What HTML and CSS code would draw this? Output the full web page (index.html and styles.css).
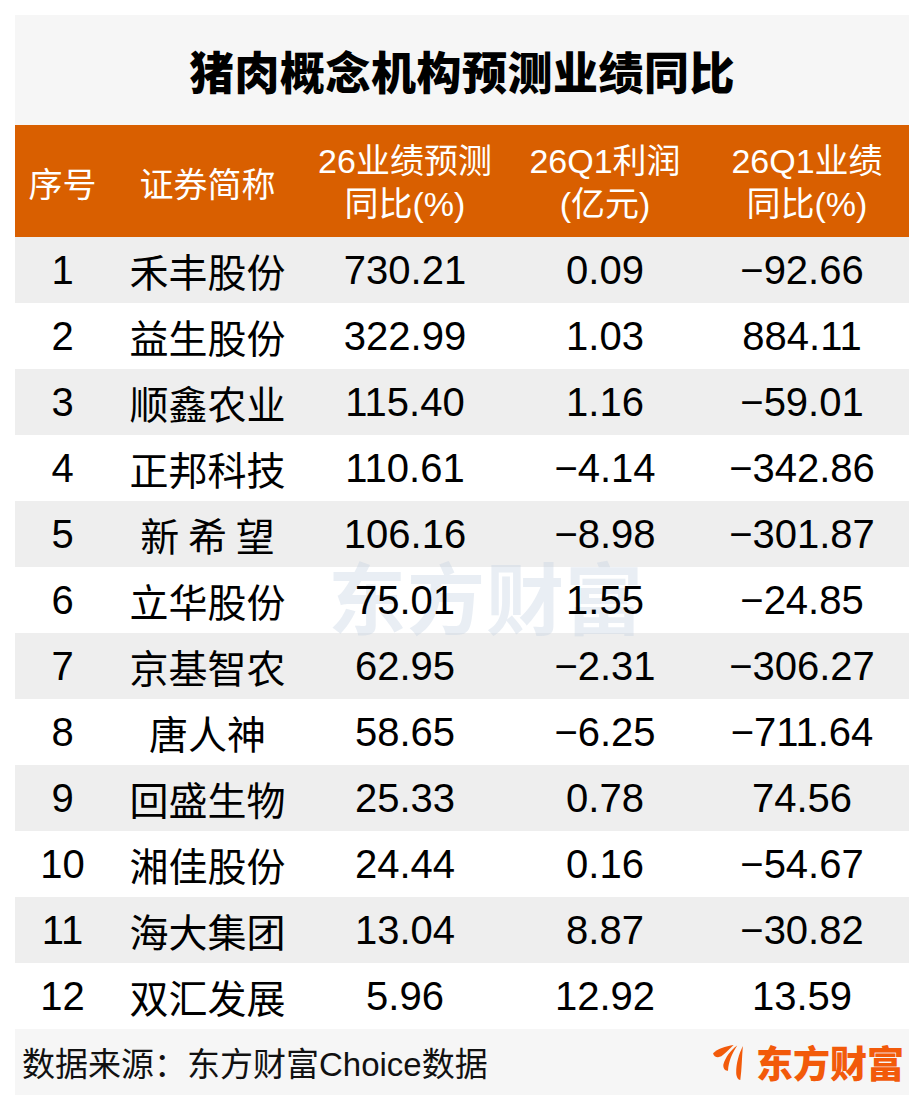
FILE: index.html
```html
<!DOCTYPE html>
<html lang="zh-CN">
<head>
<meta charset="utf-8">
<title>猪肉概念机构预测业绩同比</title>
<link rel="stylesheet" href="styles.css">
</head>
<body>
<div class="panel">
  <div class="title">猪肉概念机构预测业绩同比</div>
  <div class="table">
    <div class="watermark">东方财富</div>
    <div class="row head">
      <div class="c">序号</div>
      <div class="c">证券简称</div>
      <div class="c two"><span>26业绩预测</span><span>同比(%)</span></div>
      <div class="c two"><span>26Q1利润</span><span>(亿元)</span></div>
      <div class="c two"><span>26Q1业绩</span><span>同比(%)</span></div>
    </div>
    <div class="row odd"><div class="c">1</div><div class="c name">禾丰股份</div><div class="c">730.21</div><div class="c">0.09</div><div class="c">−92.66</div></div>
    <div class="row"><div class="c">2</div><div class="c name">益生股份</div><div class="c">322.99</div><div class="c">1.03</div><div class="c">884.11</div></div>
    <div class="row odd"><div class="c">3</div><div class="c name">顺鑫农业</div><div class="c">115.40</div><div class="c">1.16</div><div class="c">−59.01</div></div>
    <div class="row"><div class="c">4</div><div class="c name">正邦科技</div><div class="c">110.61</div><div class="c">−4.14</div><div class="c">−342.86</div></div>
    <div class="row odd"><div class="c">5</div><div class="c name">新 希 望</div><div class="c">106.16</div><div class="c">−8.98</div><div class="c">−301.87</div></div>
    <div class="row"><div class="c">6</div><div class="c name">立华股份</div><div class="c">75.01</div><div class="c">1.55</div><div class="c">−24.85</div></div>
    <div class="row odd"><div class="c">7</div><div class="c name">京基智农</div><div class="c">62.95</div><div class="c">−2.31</div><div class="c">−306.27</div></div>
    <div class="row"><div class="c">8</div><div class="c name">唐人神</div><div class="c">58.65</div><div class="c">−6.25</div><div class="c">−711.64</div></div>
    <div class="row odd"><div class="c">9</div><div class="c name">回盛生物</div><div class="c">25.33</div><div class="c">0.78</div><div class="c">74.56</div></div>
    <div class="row"><div class="c">10</div><div class="c name">湘佳股份</div><div class="c">24.44</div><div class="c">0.16</div><div class="c">−54.67</div></div>
    <div class="row odd"><div class="c">11</div><div class="c name">海大集团</div><div class="c">13.04</div><div class="c">8.87</div><div class="c">−30.82</div></div>
    <div class="row"><div class="c">12</div><div class="c name">双汇发展</div><div class="c">5.96</div><div class="c">12.92</div><div class="c">13.59</div></div>
  </div>
  <div class="footer">
    <div class="source">数据来源：东方财富Choice数据</div>
    <div class="logo">
      <svg class="logo-icon" viewBox="0 0 36 38" width="37" height="39" aria-hidden="true">
        <path d="M23 2 C15 3 7 6 3 10 C3.5 14 8 14.5 11 13 C15 10 19 6 23 2 Z" fill="#f25a0a"/>
        <path d="M26.5 2.5 C20 7 15 14 13 21 C12.5 25 15 27.5 17.5 27 C18 18 21.5 10 26.5 2.5 Z" fill="#f25a0a"/>
        <path d="M32 3 C28 11 25.5 20 25.5 29 C25.5 33 27.5 36 29.5 36 C31 26 31 14 32 3 Z" fill="#f25a0a"/>
      </svg>
      <span class="logo-text">东方财富</span>
    </div>
  </div>
</div>
</body>
</html>
```

FILE: styles.css
```css
html, body {
  margin: 0;
  padding: 0;
  background: #ffffff;
}
body {
  font-family: "Liberation Sans", "Noto Sans CJK SC", Arial, sans-serif;
  color: #000;
}
.panel {
  margin: 15px;
  width: 894px;
}
.title {
  height: 110px;
  background: #f6f6f6;
  display: flex;
  align-items: center;
  justify-content: center;
  font-family: "Noto Sans CJK SC", sans-serif;
  font-weight: 900;
  font-size: 45px;
  letter-spacing: 0.5px;
  color: #000;
}
.table {
  position: relative;
}
.watermark {
  position: absolute;
  left: 313px;
  top: 431px;
  font-family: "Noto Sans CJK SC", sans-serif;
  font-weight: 700;
  font-size: 78px;
  line-height: 1;
  color: rgba(190, 205, 222, 0.34);
  letter-spacing: 1px;
  pointer-events: none;
  z-index: 0;
}
.row {
  display: grid;
  grid-template-columns: 95px 195px 200px 200px 204px;
  height: 66px;
  background: #ffffff;
}
.row.odd {
  background: #eeeeee;
}
.row.head {
  height: 112px;
  background: #d95f00;
  color: #ffffff;
}
.c {
  position: relative;
  z-index: 1;
  display: flex;
  align-items: center;
  justify-content: center;
  font-size: 40px;
  white-space: pre;
}
.row:not(.head) .c:last-child {
  padding-right: 10px;
}
.row.head .c {
  font-size: 34px;
  padding-top: 3px;
}
.c.two {
  flex-direction: column;
  line-height: 43px;
}
.c.name {
  font-family: "Noto Sans CJK SC", sans-serif;
  font-size: 39px;
}
.footer {
  height: 66px;
  background: #f6f6f6;
  display: flex;
  align-items: center;
  justify-content: space-between;
  padding: 0 5px 0 7px;
}
.source {
  font-size: 33px;
  color: #111;
}
.logo {
  display: flex;
  align-items: center;
  gap: 9px;
}
.logo-icon {
  display: block;
}
.logo-text {
  font-family: "Noto Sans CJK SC", sans-serif;
  font-weight: 900;
  font-size: 37px;
  color: #f25a0a;
}
```
